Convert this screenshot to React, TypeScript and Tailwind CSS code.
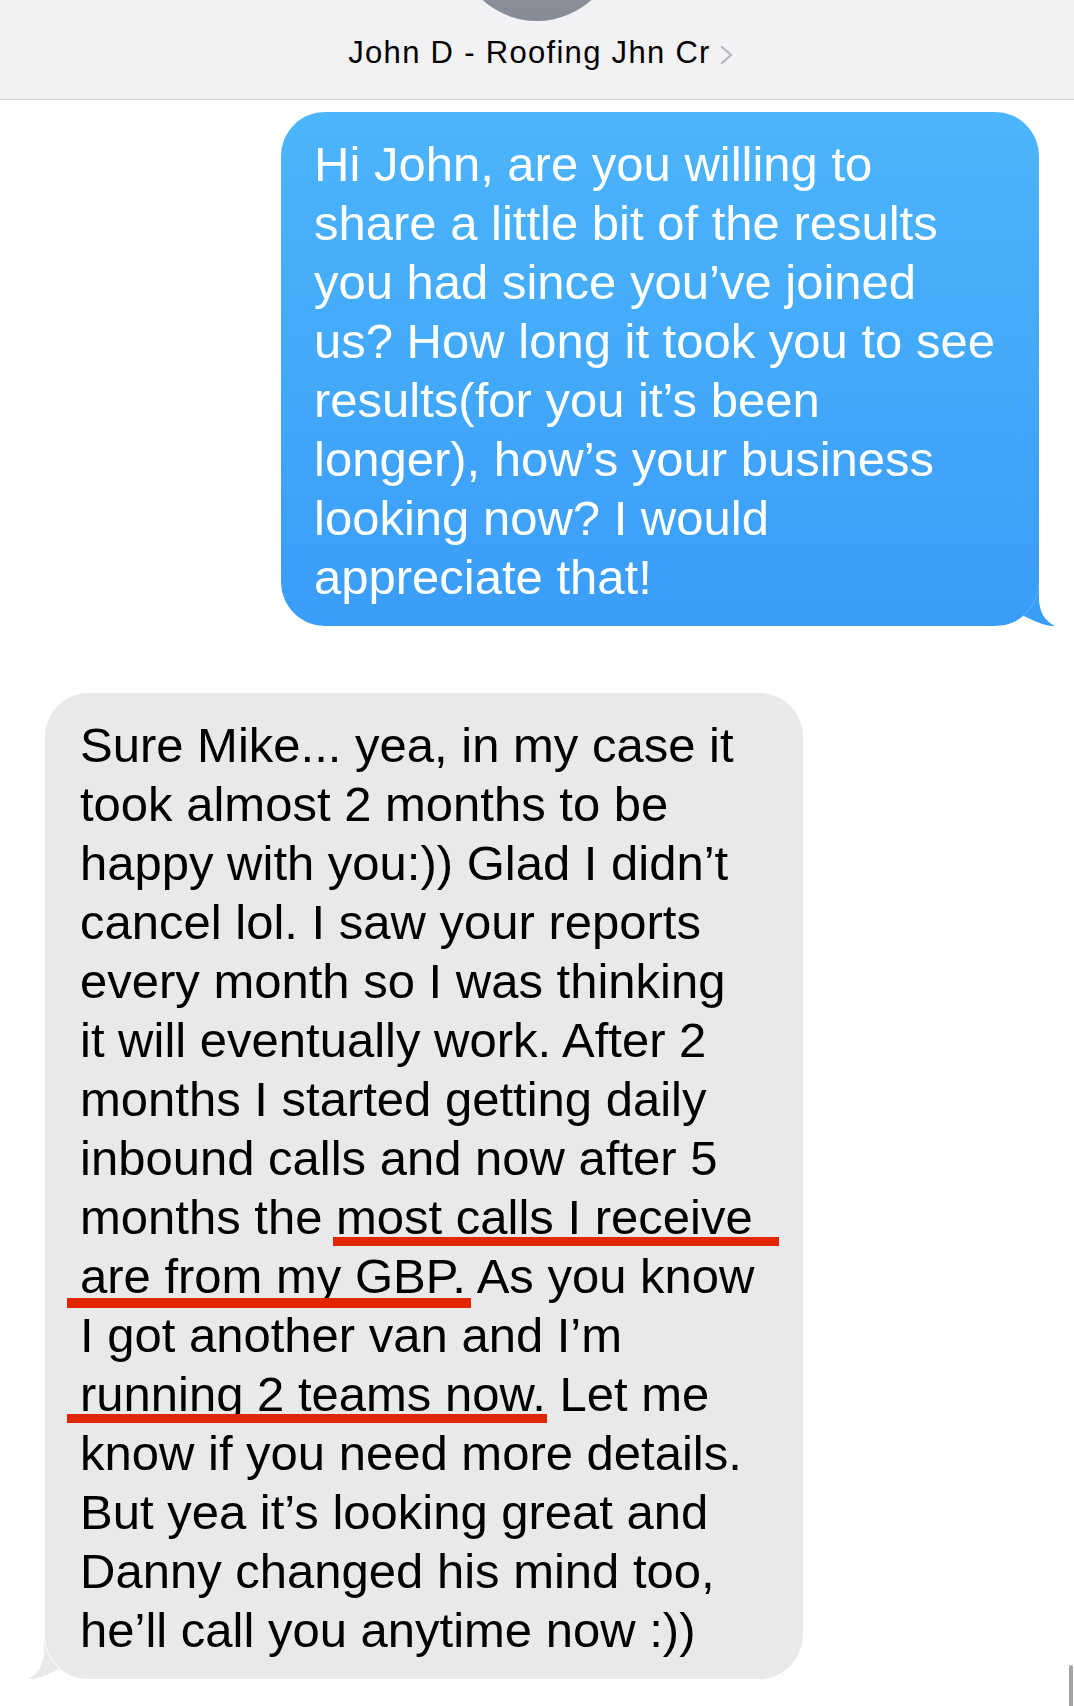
import React from "react";

const blueLines = [
  "Hi John, are you willing to",
  "share a little bit of the results",
  "you had since you’ve joined",
  "us? How long it took you to see",
  "results(for you it’s been",
  "longer), how’s your business",
  "looking now? I would",
  "appreciate that!",
];

const grayLines = [
  "Sure Mike... yea, in my case it",
  "took almost 2 months to be",
  "happy with you:)) Glad I didn’t",
  "cancel lol. I saw your reports",
  "every month so I was thinking",
  "it will eventually work. After 2",
  "months I started getting daily",
  "inbound calls and now after 5",
  "months the most calls I receive",
  "are from my GBP. As you know",
  "I got another van and I’m",
  "running 2 teams now. Let me",
  "know if you need more details.",
  "But yea it’s looking great and",
  "Danny changed his mind too,",
  "he’ll call you anytime now :))",
];

function Tail({ color, flip }: { color: string; flip?: boolean }) {
  return (
    <svg
      width="60"
      height="50"
      viewBox="0 0 60 50"
      className={
        flip
          ? "absolute bottom-0 left-[-17px] z-0 -scale-x-100"
          : "absolute bottom-0 right-[-16px] z-0"
      }
    >
      <path
        d="M0 50 C9 50 18 45 25 38 C40 46 52 50.5 60 50 C50 45 44 36 44 22 V6 A44 44 0 0 1 0 50 Z"
        fill={color}
      />
    </svg>
  );
}

export default function App() {
  return (
    <div
      className="relative min-h-[1706px] w-full overflow-hidden bg-white"
      style={{ fontFamily: '"Liberation Sans", Arial, sans-serif' }}
    >
      {/* Header */}
      <div className="flex h-[100px] flex-col items-center border-b border-[#cfcfd3] bg-[#f2f2f4]">
        <div className="mt-[-141px] h-[162px] w-[162px] shrink-0 rounded-full bg-gradient-to-b from-[#a6abb7] to-[#868b97]" />
        <div className="mt-[14px] flex items-center pl-[8px]">
          <span className="text-[31px] leading-[36px] tracking-[1.3px] text-black">
            John D - Roofing Jhn Cr
          </span>
          <svg width="14" height="20" viewBox="0 0 14 20" className="ml-[9px] mt-[4px]">
            <polyline
              points="2,2 11,10 2,18"
              fill="none"
              stroke="#b6b6bb"
              strokeWidth="2.2"
              strokeLinecap="round"
              strokeLinejoin="round"
            />
          </svg>
        </div>
      </div>

      {/* Messages */}
      <div className="flex flex-col">
        <div className="mt-[12px] mr-[35px] ml-auto w-[758px]">
          <div className="relative rounded-[44px] bg-gradient-to-b from-[#4cb5fc] to-[#3a9df8] pt-[23px] pb-[19px] pl-[33px] text-[49px] leading-[59px] text-white">
            <Tail color="#3a9df8" />
            <div className="relative z-10 flex flex-col">
              {blueLines.map((l, i) => (
                <div key={i} className="whitespace-nowrap">
                  {l}
                </div>
              ))}
            </div>
          </div>
        </div>

        <div className="mt-[67px] ml-[45px] w-[758px]">
          <div className="relative rounded-[44px] bg-[#e9e9eb] pt-[23px] pb-[19px] pl-[35px] text-[49px] leading-[59px] text-black">
            <Tail color="#e9e9eb" flip />
            <div className="relative z-10 flex flex-col">
              {grayLines.map((l, i) => (
                <div key={i} className="whitespace-nowrap">
                  {l}
                </div>
              ))}
            </div>
            {/* red hand-drawn underlines */}
            <div className="absolute left-[288px] top-[544px] z-20 h-[9px] w-[446px] bg-[#e22600]" />
            <div className="absolute left-[22px] top-[605px] z-20 h-[10px] w-[404px] bg-[#e22600]" />
            <div className="absolute left-[22px] top-[721px] z-20 h-[9px] w-[480px] bg-[#e22600]" />
          </div>
        </div>
      </div>

      {/* scroll indicator */}
      <div className="absolute right-[1px] top-[1665px] h-[41px] w-[4px] rounded-t-full bg-[#a3a3a3]" />
    </div>
  );
}
